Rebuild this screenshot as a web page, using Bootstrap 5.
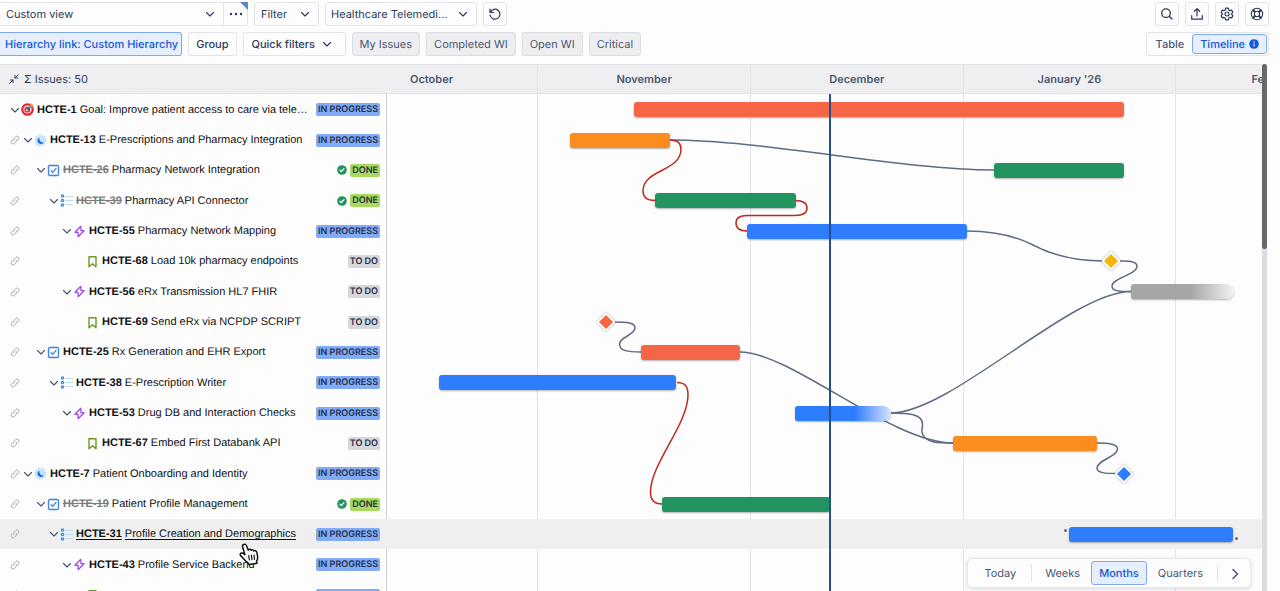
<!DOCTYPE html>
<html lang="en">
<head>
<meta charset="utf-8">
<meta name="viewport" content="width=device-width, initial-scale=1">
<title>Timeline</title>
<link href="https://cdn.jsdelivr.net/npm/bootstrap@5.3.0/dist/css/bootstrap.min.css" rel="stylesheet">
<style>
  :root { --ink:#2b3a58; --line:#e3e4e8; --soft:#fdfdfd; --blue:#1558d6; }
  body { font-family:Inter,"Liberation Sans",sans-serif; font-size:11px; line-height:16px; color:var(--ink); background:var(--soft); text-rendering:geometricPrecision; }
  button, select { text-rendering:inherit; }
  svg { flex:none; }
  .ico { fill:none; stroke:currentColor; stroke-linecap:round; stroke-linejoin:round; }

  /* toolbar controls */
  .toolbar { padding:2px 11px 8px 0; gap:6px; }
  .tools { gap:6px; }
  .ctl { height:24px; padding:0 7px; font-size:11px; line-height:16px; color:var(--ink); background-color:var(--soft); border:1px solid var(--line); border-radius:3px; white-space:nowrap; }
  .ctl.square { width:24px; padding:0; display:inline-flex; align-items:center; justify-content:center; }
  .ctl.form-select { width:auto; padding:0 20px 0 6px; background-size:10px 10px; background-position:right 8px center; text-overflow:ellipsis;
    background-image:url("data:image/svg+xml,%3csvg xmlns='http://www.w3.org/2000/svg' viewBox='0 0 10 10'%3e%3cpath d='M1.500 3.500 5 7l3.500-3.500' fill='none' stroke='%232b3a58' stroke-width='1.100' stroke-linecap='round' stroke-linejoin='round'/%3e%3c/svg%3e"); }
  .ctl.w-view { width:224px; border-left:0; border-radius:0; }
  .ctl.w-more { width:25px; margin-left:-1px; border-radius:0 3px 3px 0; }
  .ctl.w-filter { width:65px; }
  .ctl.w-plan { width:152px; padding-left:5px; }
  .ctl.w-quick { width:103px; padding-left:8px; background-position:right 13px center; }
  .strong-label { font-weight:500; }
  .ctl.chosen { color:var(--blue); background:#e6effd; border-color:#7faaf0; font-weight:500; }
  .ctl.link-type { border-left:0; border-radius:0 3px 3px 0; padding:0 3px 0 5px; min-width:180px; text-align:left; }
  .ctl.muted { background:#eeeef1; border-color:#dcdde2; color:#4a5872; }
  .corner { top:0; right:0; width:8px; height:8px; background:#5684cf; clip-path:polygon(0 0,100% 0,100% 100%); }
  .switcher { height:24px; padding:1px; border:1px solid var(--line); border-radius:3px; }
  .switcher .ctl { height:20px; font-weight:500; padding:0 7px; }
  .switcher .plain { border-color:transparent; color:#4a5872; }

  /* issue tree */
  .pane-head { height:30px; background:#efeff1; border-top:1px solid var(--line); border-bottom:1px solid var(--line); }
  .tree { width:386px; }
  .tree .pane-head { padding-left:9px; gap:5px; }
  .line { height:30px; }
  .line:nth-child(3n+1) { height:31px; }
  .line.hover { background:#efefef; }
  .issue { padding:0 6px 0 9px; font-family:"Liberation Sans",Arial,sans-serif; color:#111; }
  .issue a { color:inherit; text-decoration:none; flex:1; margin:0 5px 0 3px; }
  .issue.hover a { text-decoration:underline; text-underline-offset:2px; }
  .key { font-weight:700; margin-right:3px; }
  .hover .key { margin-right:0; padding-right:3px; }
  .key.closed { color:#7b7b7b; text-decoration:line-through; }
  .twist { border:0; background:none; padding:0; width:12px; height:14px; display:inline-flex; align-items:center; justify-content:center; color:#44546f; }
  .linked { color:#b0b0b0; }
  .lv1 .linked { margin-right:1px; } .lv2 .linked { margin-right:14px; } .lv3 .linked { margin-right:27px; }
  .lv4 .linked { margin-right:40px; } .lv5 .linked { margin-right:65px; }
  .state { font:600 9px/13px Inter,sans-serif; height:13px; padding:0 2px; border-radius:2px; color:#24304a; }
  .doing { background:#82abf5; } .done { background:#a9d95c; } .todo { background:#d6d7da; }
  .tick { margin-right:3px; }
  .pointer { left:239px; top:24px; z-index:5; }

  /* chart */
  .chart { box-shadow:inset 1px 0 #cfcfd2; }
  .months { margin-left:-7%; padding-left:1px; }
  .month { flex:0 0 24.3%; border-right:1px solid var(--line); font-weight:600; color:#4a5872; }
  .month.short { flex-basis:22.8%; }
  .lanes { z-index:2; }
  .links { z-index:1; height:512px; fill:none; stroke:#5f6b84; }
  .links path { vector-effect:non-scaling-stroke; stroke-width:1.500; }
  .links .late { stroke:#bf2a20; }
  .bar { height:15px; border-radius:3px; box-shadow:0 1px 2px rgba(0,0,0,.3); position:relative; }
  .red { background:#f76547; } .orange { background:#fb8c1e; } .green { background:#22945f; } .azure { background:#2e7dfe; } .amber { background:#f5b50f; }
  .azure.open { background:linear-gradient(90deg,#2e7dfe 62%,#d5e3fd); border-radius:3px 8px 8px 3px; }
  .gray.open { background:linear-gradient(90deg,#a6a6a6 58%,#f3f3f3); border-radius:3px 8px 8px 3px; }
  .gem { width:14px; height:14px; margin-left:-7px; border:2px solid #fff; border-radius:2px; transform:rotate(45deg); box-shadow:0 0 2px rgba(0,0,0,.4); }
  .today { z-index:3; width:2px; background:#24508f; margin-left:-1px; }
  .grip { width:3px; height:3px; border-radius:50%; background:#6b6b6b; }
  .grip.start { left:-5px; top:2px; } .grip.end { right:-5px; bottom:2px; }
  .scales { z-index:4; right:11px; bottom:3px; height:30px; padding:2px; background:var(--soft); border:1px solid #e8e8eb; border-radius:5px; box-shadow:0 1px 4px rgba(0,0,0,.15); }
  .scales .ctl { color:#4a5872; border-color:transparent; padding:0 10px 0 12px; }
  .scales .ctl.today-btn { padding:0 14px 0 13px; } .scales .ctl.quarters { padding:0 13px 0 10px; }
  .scales .ctl.chosen { color:var(--blue); border-color:#7faaf0; padding:0 7px; }
  .scales .ctl.next { width:30px; padding:0 0 0 4px; }
  .rule { width:1px; height:18px; background:var(--line); }
  .track { width:5px; margin-right:13px; background:#dcdce2; }
  .thumb { height:185px; background:#68686b; border-radius:3px; }
</style>
</head>
<body class="vh-100 overflow-hidden d-flex flex-column">
<svg width="0" height="0" class="position-absolute" aria-hidden="true">
  <symbol id="chev" viewBox="0 0 10 10"><path class="ico" stroke-width="1.100" d="M1.500 3.500 5 7l3.500-3.500"/></symbol>
  <symbol id="link" viewBox="0 0 12 12"><path class="ico" d="M5 7a2 2 0 0 1 0-2.800L6.700 2.500a2 2 0 0 1 2.800 2.800L8.500 6.300M7 5a2 2 0 0 1 0 2.800L5.300 9.500A2 2 0 0 1 2.500 6.700l1-1"/></symbol>
  <symbol id="goal" viewBox="0 0 13 13"><circle cx="6.500" cy="6.500" r="6.300" fill="#dc2638"/><circle cx="6.500" cy="6.500" r="4.100" fill="#ffe3e3"/><circle cx="6.300" cy="6.700" r="2.900" fill="#dc2638"/><circle cx="6" cy="7" r="1.300" fill="#ffe3e3"/><path d="M6 7l4-4" stroke="#2d63b8" stroke-width="1.200"/><path d="M9 1.500 9.500 3.500l2 .5L13 2l-1.700-.2L11 0z" fill="#f8a23a"/></symbol>
  <symbol id="epic" viewBox="0 0 13 13"><circle cx="6.500" cy="6.500" r="4.800" fill="#c9e7fb"/><circle cx="6.500" cy="6.500" r="5.300" fill="none" stroke="#a5d6f5" stroke-width="1.600" stroke-dasharray="1.200 1.575"/><path d="M5.500 3.600a3.300 3.300 0 1 0 4.200 4.600A3.500 3.500 0 0 1 5.500 3.600z" fill="#1767d8"/></symbol>
  <symbol id="task" viewBox="0 0 13 13"><rect x="1.500" y="1.500" width="10" height="10" rx="1.200" fill="none" stroke="#3d80ee" stroke-width="1.300"/><path class="ico" color="#3d80ee" stroke-width="1.200" d="M4 6.700 5.700 8.400 9 4.500"/></symbol>
  <symbol id="list" viewBox="0 0 13 13"><g fill="#3c8ee0"><circle cx="2.500" cy="2" r="1.800"/><circle cx="2.500" cy="6.500" r="1.800"/><circle cx="2.500" cy="11" r="1.800"/></g><g fill="#bfe3fb"><circle cx="2.500" cy="2" r=".5"/><circle cx="2.500" cy="6.500" r=".5"/><circle cx="2.500" cy="11" r=".5"/></g><path d="M5.500 2.500H13M5.500 6.500H13M5.500 10.500H13" stroke="#b9dcf5" stroke-width="1"/></symbol>
  <symbol id="bolt" viewBox="0 0 13 13"><path class="ico" color="#a04be8" stroke-width="1.300" d="M7.800 1.300 2 7.300h3L5.200 11.700 11 5.700H8z"/></symbol>
  <symbol id="book" viewBox="0 0 13 13"><path class="ico" color="#6a9a23" stroke-width="1.400" d="M3 1.700h7v10L6.500 8.800 3 11.700z"/></symbol>
  <symbol id="ok" viewBox="0 0 10 10"><circle cx="5" cy="5" r="4.800" fill="#22925f"/><path class="ico" color="#fff" stroke-width="1.200" d="M3 5.200 4.400 6.500 7 3.700"/></symbol>
</svg>

<header class="toolbar d-flex flex-column">
  <div class="tools d-flex align-items-center">
    <div class="d-flex position-relative">
      <select class="ctl form-select w-view" aria-label="View"><option>Custom view</option></select>
      <button class="ctl square w-more" aria-label="More"><svg width="14" height="4" fill="currentColor"><circle cx="2" cy="2" r="1.200"/><circle cx="7" cy="2" r="1.200"/><circle cx="12" cy="2" r="1.200"/></svg></button>
      <span class="corner position-absolute"></span>
    </div>
    <select class="ctl form-select w-filter" aria-label="Filter"><option>Filter</option></select>
    <select class="ctl form-select w-plan" aria-label="Plan"><option>Healthcare Telemedi...</option></select>
    <button class="ctl square" aria-label="Reset"><svg width="14" height="14" viewBox="0 0 14 14"><path class="ico" stroke-width="1.200" d="M2 2v3.500h3.500M2.300 5.300A5 5 0 1 1 2 8"/></svg></button>
    <button class="ctl square ms-auto" aria-label="Search"><svg width="14" height="14" viewBox="0 0 14 14"><path class="ico" stroke-width="1.300" d="M9.500 9.500 12 12M10.300 6.200a4.300 4.300 0 1 1-8.600 0 4.300 4.300 0 0 1 8.600 0z"/></svg></button>
    <button class="ctl square" aria-label="Export"><svg width="14" height="14" viewBox="0 0 14 14"><path class="ico" stroke-width="1.200" d="M7 9V1.800M4.300 4.300 7 1.700l2.700 2.600M1.700 8.500v3.700h10.600V8.500"/></svg></button>
    <button class="ctl square" aria-label="Settings"><svg width="14" height="14" viewBox="0 0 14 14"><path class="ico" stroke-width="1.200" d="M5.700 1.200h2.600l.4 1.700 1.300.8 1.700-.5 1.200 2.200L11.700 6.500v1l1.200 1.200-1.200 2.200-1.700-.5-1.300.8-.4 1.700H5.700l-.4-1.700L4 10.400l-1.700.5L1.100 8.700l1.200-1.200v-1L1.100 5.400l1.200-2.200 1.700.5 1.300-.8z"/><circle class="ico" stroke-width="1.200" cx="7" cy="7" r="2"/></svg></button>
    <button class="ctl square" aria-label="Help"><svg width="14" height="14" viewBox="0 0 14 14"><g class="ico" stroke-width="1.100"><circle cx="7" cy="7" r="5.700"/><circle cx="7" cy="7" r="2.700"/><path d="M2.700 3.300 4.700 5.300M3.300 2.700 5.300 4.700M10.700 2.700 8.700 4.700M11.300 3.300 9.300 5.300M2.700 10.700 4.700 8.700M3.300 11.300 5.300 9.300M11.300 10.700 9.300 8.700M10.700 11.300 8.700 9.300"/></g></svg></button>
  </div>
  <div class="tools d-flex align-items-center">
    <button class="ctl chosen link-type">Hierarchy link: Custom Hierarchy</button>
    <button class="ctl strong-label">Group</button>
    <select class="ctl form-select w-quick strong-label" aria-label="Quick filters"><option>Quick filters</option></select>
    <button class="ctl muted">My Issues</button>
    <button class="ctl muted">Completed WI</button>
    <button class="ctl muted">Open WI</button>
    <button class="ctl muted">Critical</button>
    <div class="switcher d-flex ms-auto">
      <button class="ctl plain">Table</button>
      <button class="ctl chosen d-flex align-items-center gap-1">Timeline <svg width="10" height="10" viewBox="0 0 10 10"><circle cx="5" cy="5" r="4.800" fill="#1558d6"/><path d="M5 4.500v3M5 2.300v1.200" stroke="#e6effd" stroke-width="1.200"/></svg></button>
    </div>
  </div>
</header>

<main class="d-flex flex-grow-1 overflow-hidden">
  <section class="tree flex-shrink-0">
    <div class="pane-head d-flex align-items-center"><svg width="10" height="10" viewBox="0 0 10 10"><path class="ico" d="M9.300.7 6 4M6 1.500V4h2.500M.7 9.300 4 6M1.500 6H4v2.500"/></svg><span>Σ Issues: 50</span></div>
    <div>
      <div class="line issue lv0 d-flex align-items-center"><button class="twist" aria-label="Collapse"><svg width="10" height="10"><use href="#chev"/></svg></button><svg width="13" height="13"><use href="#goal"/></svg><a href="#" class="text-truncate"><span class="key">HCTE-1</span>Goal: Improve patient access to care via tele…</a><span class="state doing">IN PROGRESS</span></div>
      <div class="line issue lv1 d-flex align-items-center"><svg class="linked" width="12" height="12"><use href="#link"/></svg><button class="twist" aria-label="Collapse"><svg width="10" height="10"><use href="#chev"/></svg></button><svg width="13" height="13"><use href="#epic"/></svg><a href="#" class="text-truncate"><span class="key">HCTE-13</span>E-Prescriptions and Pharmacy Integration</a><span class="state doing">IN PROGRESS</span></div>
      <div class="line issue lv2 d-flex align-items-center"><svg class="linked" width="12" height="12"><use href="#link"/></svg><button class="twist" aria-label="Collapse"><svg width="10" height="10"><use href="#chev"/></svg></button><svg width="13" height="13"><use href="#task"/></svg><a href="#" class="text-truncate"><span class="key closed">HCTE-26</span>Pharmacy Network Integration</a><svg class="tick" width="10" height="10"><use href="#ok"/></svg><span class="state done">DONE</span></div>
      <div class="line issue lv3 d-flex align-items-center"><svg class="linked" width="12" height="12"><use href="#link"/></svg><button class="twist" aria-label="Collapse"><svg width="10" height="10"><use href="#chev"/></svg></button><svg width="13" height="13"><use href="#list"/></svg><a href="#" class="text-truncate"><span class="key closed">HCTE-39</span>Pharmacy API Connector</a><svg class="tick" width="10" height="10"><use href="#ok"/></svg><span class="state done">DONE</span></div>
      <div class="line issue lv4 d-flex align-items-center"><svg class="linked" width="12" height="12"><use href="#link"/></svg><button class="twist" aria-label="Collapse"><svg width="10" height="10"><use href="#chev"/></svg></button><svg width="13" height="13"><use href="#bolt"/></svg><a href="#" class="text-truncate"><span class="key">HCTE-55</span>Pharmacy Network Mapping</a><span class="state doing">IN PROGRESS</span></div>
      <div class="line issue lv5 d-flex align-items-center"><svg class="linked" width="12" height="12"><use href="#link"/></svg><svg width="13" height="13"><use href="#book"/></svg><a href="#" class="text-truncate"><span class="key">HCTE-68</span>Load 10k pharmacy endpoints</a><span class="state todo">TO DO</span></div>
      <div class="line issue lv4 d-flex align-items-center"><svg class="linked" width="12" height="12"><use href="#link"/></svg><button class="twist" aria-label="Collapse"><svg width="10" height="10"><use href="#chev"/></svg></button><svg width="13" height="13"><use href="#bolt"/></svg><a href="#" class="text-truncate"><span class="key">HCTE-56</span>eRx Transmission HL7 FHIR</a><span class="state todo">TO DO</span></div>
      <div class="line issue lv5 d-flex align-items-center"><svg class="linked" width="12" height="12"><use href="#link"/></svg><svg width="13" height="13"><use href="#book"/></svg><a href="#" class="text-truncate"><span class="key">HCTE-69</span>Send eRx via NCPDP SCRIPT</a><span class="state todo">TO DO</span></div>
      <div class="line issue lv2 d-flex align-items-center"><svg class="linked" width="12" height="12"><use href="#link"/></svg><button class="twist" aria-label="Collapse"><svg width="10" height="10"><use href="#chev"/></svg></button><svg width="13" height="13"><use href="#task"/></svg><a href="#" class="text-truncate"><span class="key">HCTE-25</span>Rx Generation and EHR Export</a><span class="state doing">IN PROGRESS</span></div>
      <div class="line issue lv3 d-flex align-items-center"><svg class="linked" width="12" height="12"><use href="#link"/></svg><button class="twist" aria-label="Collapse"><svg width="10" height="10"><use href="#chev"/></svg></button><svg width="13" height="13"><use href="#list"/></svg><a href="#" class="text-truncate"><span class="key">HCTE-38</span>E-Prescription Writer</a><span class="state doing">IN PROGRESS</span></div>
      <div class="line issue lv4 d-flex align-items-center"><svg class="linked" width="12" height="12"><use href="#link"/></svg><button class="twist" aria-label="Collapse"><svg width="10" height="10"><use href="#chev"/></svg></button><svg width="13" height="13"><use href="#bolt"/></svg><a href="#" class="text-truncate"><span class="key">HCTE-53</span>Drug DB and Interaction Checks</a><span class="state doing">IN PROGRESS</span></div>
      <div class="line issue lv5 d-flex align-items-center"><svg class="linked" width="12" height="12"><use href="#link"/></svg><svg width="13" height="13"><use href="#book"/></svg><a href="#" class="text-truncate"><span class="key">HCTE-67</span>Embed First Databank API</a><span class="state todo">TO DO</span></div>
      <div class="line issue lv1 d-flex align-items-center"><svg class="linked" width="12" height="12"><use href="#link"/></svg><button class="twist" aria-label="Collapse"><svg width="10" height="10"><use href="#chev"/></svg></button><svg width="13" height="13"><use href="#epic"/></svg><a href="#" class="text-truncate"><span class="key">HCTE-7</span>Patient Onboarding and Identity</a><span class="state doing">IN PROGRESS</span></div>
      <div class="line issue lv2 d-flex align-items-center"><svg class="linked" width="12" height="12"><use href="#link"/></svg><button class="twist" aria-label="Collapse"><svg width="10" height="10"><use href="#chev"/></svg></button><svg width="13" height="13"><use href="#task"/></svg><a href="#" class="text-truncate"><span class="key closed">HCTE-19</span>Patient Profile Management</a><svg class="tick" width="10" height="10"><use href="#ok"/></svg><span class="state done">DONE</span></div>
      <div class="line issue lv3 hover position-relative d-flex align-items-center"><svg class="linked" width="12" height="12"><use href="#link"/></svg><button class="twist" aria-label="Collapse"><svg width="10" height="10"><use href="#chev"/></svg></button><svg width="13" height="13"><use href="#list"/></svg><a href="#" class="text-truncate"><span class="key">HCTE-31</span>Profile Creation and Demographics</a><span class="state doing">IN PROGRESS</span>
        <svg class="pointer position-absolute" width="21" height="23" viewBox="0 0 21 23"><path d="M4.500 1.500c1.200-.8 2.500 0 3 1.200L9.200 7c.8-1 2.400-.8 2.900.3.900-.8 2.300-.5 2.700.6 1-.6 2.600-.2 2.900 1.200.9 3 1.500 5 .6 7.500l-.8 1.900.4 1.800-8 1.200-.9-1.700c-2.300-1.200-3.800-3.200-5.400-5.200-.9-1.100-2.700-2.100-2.500-3.300.4-1.700 2.300-1.700 3.500-.7l1.300 1L3.600 4c-.3-1 0-2 .9-2.500z" fill="#fff" stroke="#111" stroke-width="1.500" stroke-linejoin="round"/><path d="M9.700 12.500l.7 4.500M12.400 12.200l.6 4.500M15 12l.5 4.300" stroke="#111" stroke-width="1.200" stroke-linecap="round"/></svg></div>
      <div class="line issue lv4 d-flex align-items-center"><svg class="linked" width="12" height="12"><use href="#link"/></svg><button class="twist" aria-label="Collapse"><svg width="10" height="10"><use href="#chev"/></svg></button><svg width="13" height="13"><use href="#bolt"/></svg><a href="#" class="text-truncate"><span class="key">HCTE-43</span>Profile Service Backend</a><span class="state doing">IN PROGRESS</span></div>
      <div class="line issue lv5 d-flex align-items-center"><svg class="linked" width="12" height="12"><use href="#link"/></svg><svg width="13" height="13"><use href="#book"/></svg><span class="state doing ms-auto">IN PROGRESS</span></div>
    </div>
  </section>

  <section class="chart position-relative flex-grow-1 overflow-hidden d-flex flex-column">
    <div class="pane-head flex-shrink-0 overflow-hidden">
      <div class="months d-flex w-100 h-100">
        <div class="month d-flex align-items-center justify-content-center">October</div>
        <div class="month d-flex align-items-center justify-content-center">November</div>
        <div class="month d-flex align-items-center justify-content-center">December</div>
        <div class="month d-flex align-items-center justify-content-center">January '26</div>
        <div class="month short d-flex align-items-center justify-content-center">February</div>
      </div>
    </div>
    <div class="position-relative flex-grow-1">
      <div class="position-absolute top-0 start-0 w-100 h-100">
        <div class="months d-flex w-100 h-100"><div class="month"></div><div class="month"></div><div class="month"></div><div class="month"></div></div>
      </div>
      <svg class="links position-absolute top-0 start-0 w-100" viewBox="0 0 876 512" preserveAspectRatio="none">
        <path d="M284 46C380 46 512 76 608 76"/>
        <path d="M581 137C605 137 629 142 647 151C666 161 690 167 718 167"/>
        <path d="M731 167H737C746 167 751 168 751 172C751 181 726 184 726 192C726 197 732 197.500 745 197.500"/>
        <path d="M505 319C565 319 685 197.500 745 197.500"/>
        <path d="M505 319C523 319 536 320 536.500 330C537 336 534 336 537 341C541 349 552 349 567 349"/>
        <path d="M354 258C405 258 505 349 567 349"/>
        <path d="M226 228C242 228 249 228.500 249 234C249 241 233.500 243 233.500 250C233.500 257 242 258 255 258"/>
        <path d="M711 349C724 349 731.500 350 731.500 355C731.500 363 711 366 711 374C711 379 719 379.500 732 379.500"/>
        <path class="late" d="M284 46C291 46 295 49 295 55C295 78 257 75 257 97C257 103 261 106.500 269 106.500"/>
        <path class="late" d="M409 106.500C417 106.500 421 109 421 114S416 121.500 409 121.500H361C354 121.500 350 124 350 129S354 137 361 137"/>
        <path class="late" d="M291 288.500C298 288.500 302 291 302 301C302 330 264.500 370 264.500 398C264.500 406 268 410 276 410"/>
      </svg>
      <div class="position-relative">
        <div class="line d-flex align-items-center"><div class="bar lanes red" style="margin-left:28.31%;width:55.94%"></div></div>
        <div class="line d-flex align-items-center"><div class="bar lanes orange" style="margin-left:21%;width:11.42%"></div></div>
        <div class="line d-flex align-items-center"><div class="bar lanes green" style="margin-left:69.41%;width:14.84%"></div></div>
        <div class="line d-flex align-items-center"><div class="bar lanes green" style="margin-left:30.71%;width:16.04%"></div></div>
        <div class="line d-flex align-items-center"><div class="bar lanes azure" style="margin-left:41.21%;width:25.11%"></div></div>
        <div class="line d-flex align-items-center"><div class="w-100" style="padding-left:82.73%"><div class="gem lanes position-relative amber"></div></div></div>
        <div class="line d-flex align-items-center"><div class="bar lanes gray open" style="margin-left:85.05%;width:11.75%"></div></div>
        <div class="line d-flex align-items-center"><div class="w-100" style="padding-left:25.09%"><div class="gem lanes position-relative red"></div></div></div>
        <div class="line d-flex align-items-center"><div class="bar lanes red" style="margin-left:29.11%;width:11.3%"></div></div>
        <div class="line d-flex align-items-center"><div class="bar lanes azure" style="margin-left:6.05%;width:27.11%"></div></div>
        <div class="line d-flex align-items-center"><div class="bar lanes azure open" style="margin-left:46.69%;width:10.96%"></div></div>
        <div class="line d-flex align-items-center"><div class="bar lanes orange" style="margin-left:64.73%;width:16.44%"></div></div>
        <div class="line d-flex align-items-center"><div class="w-100" style="padding-left:84.3%"><div class="gem lanes position-relative azure"></div></div></div>
        <div class="line d-flex align-items-center"><div class="bar lanes green" style="margin-left:31.51%;width:19.12%"></div></div>
        <div class="line hover d-flex align-items-center"><div class="bar lanes azure" style="margin-left:77.97%;width:18.72%"><span class="grip start position-absolute"></span><span class="grip end position-absolute"></span></div></div>
      </div>
      <div class="today position-absolute top-0 h-100" style="left:50.68%"></div>
    </div>
    <div class="scales position-absolute d-flex align-items-center">
      <button class="ctl today-btn">Today</button><span class="rule"></span>
      <button class="ctl">Weeks</button>
      <button class="ctl chosen">Months</button>
      <button class="ctl quarters">Quarters</button><span class="rule"></span>
      <button class="ctl next" aria-label="Next"><svg width="10" height="12" viewBox="0 0 10 12"><path class="ico" stroke-width="1.500" d="M3 1.500 7.500 6 3 10.500"/></svg></button>
    </div>
  </section>
  <div class="track flex-shrink-0"><div class="thumb"></div></div>
</main>
<script src="https://cdn.jsdelivr.net/npm/bootstrap@5.3.0/dist/js/bootstrap.bundle.min.js"></script>
</body>
</html>
